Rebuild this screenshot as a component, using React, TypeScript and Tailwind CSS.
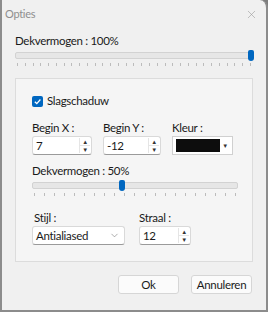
import React from 'react';
import { ChevronDown, X } from 'lucide-react';

function Ticks({ count }: { count: number }) {
  return (
    <div className="flex justify-between px-[2px] mt-[4px]">
      {Array.from({ length: count }).map((_, i) => (
        <span key={i} className="w-px h-[3px] bg-[#bcbcbc]" />
      ))}
    </div>
  );
}

function Slider({ pct, ticks }: { pct: number; ticks: number }) {
  return (
    <div>
      <div className="relative h-[7px] mt-[4px] bg-[#e6e6e6] border border-[#d2d2d2] rounded-[2px]">
        <span
          className="absolute top-[-3px] w-[6px] h-[11px] bg-[#0067c0] rounded-[2px] rounded-b-[3px]"
          style={{ left: `calc(${pct}% - 4px)` }}
        />
      </div>
      <Ticks count={ticks} />
    </div>
  );
}

function Spin({ value, width }: { value: string; width: string }) {
  return (
    <div className={`flex h-[19px] bg-white border border-[#d9d9d9] border-b-[#9a9a9a] rounded-[3px] ${width}`}>
      <span className="flex-1 pl-[3px] leading-[18px]">{value}</span>
      <div className="flex flex-col w-[11px] mr-[1px] my-[1px] border-l border-[#e5e5e5]">
        <span className="flex-1 flex items-center justify-center text-[6px] leading-none text-[#333]">▲</span>
        <span className="flex-1 flex items-center justify-center text-[6px] leading-none text-[#333] border-t border-[#e5e5e5]">▼</span>
      </div>
    </div>
  );
}

export default function App() {
  return (
    <div className="w-[268px] h-[312px] bg-[#7d7d7d] font-['Lato',sans-serif] text-[11.5px] tracking-[-0.3px] text-[#1a1a1a]">
      <div className="h-full flex flex-col bg-[#f0f0f0] border-[2px] border-[#8c8c8c] border-t-0 rounded-tr-[8px]">
        <div className="flex items-center justify-between h-[28px] pl-[3px] pr-[8px]">
          <span className="text-[11px] text-[#8e8e8e]">Opties</span>
          <X className="w-[13px] h-[13px] text-[#9a9a9a]" strokeWidth={1.1} />
        </div>

        <div className="px-[13px] pt-[6px]">
          <p className="leading-[14px]">Dekvermogen : 100%</p>
          <Slider pct={100} ticks={31} />

          <div className="mt-[12px] h-[184px] bg-[#f5f5f5] border border-[#dcdcdc] pl-[16px] pr-[14px] pt-[16px]">
            <label className="flex items-center gap-[4px] h-[12px]">
              <span className="w-[11px] h-[11px] rounded-[2px] bg-[#0067c0] flex items-center justify-center">
                <svg viewBox="0 0 10 10" className="w-[9px] h-[9px]">
                  <path d="M2 5.2 L4.2 7.3 L8.2 2.8" fill="none" stroke="white" strokeWidth="1.4" />
                </svg>
              </span>
              <span>Slagschaduw</span>
            </label>

            <div className="flex gap-[11px] mt-[14px]">
              <div>
                <p className="leading-[14px] mb-[1px]">Begin X :</p>
                <Spin value="7" width="w-[60px]" />
              </div>
              <div>
                <p className="leading-[14px] mb-[1px]">Begin Y :</p>
                <Spin value="-12" width="w-[58px]" />
              </div>
              <div>
                <p className="leading-[14px] mb-[1px]">Kleur :</p>
                <div className="flex items-center h-[19px] w-[61px] bg-white border border-[#d0d0d0] pl-[3px] pr-[2px]">
                  <span className="w-[44px] h-[13px] bg-[#0d0d0d]" />
                  <span className="flex-1 text-center text-[6px] text-[#333]">▼</span>
                </div>
              </div>
            </div>

            <p className="leading-[14px] mt-[9px]">Dekvermogen : 50%</p>
            <Slider pct={44} ticks={21} />

            <div className="flex gap-[14px] mt-[15px]">
              <div>
                <p className="leading-[14px] mb-[1px] pl-[2px]">Stijl :</p>
                <div className="flex items-center justify-between h-[19px] w-[93px] bg-white border border-[#d9d9d9] border-b-[#9a9a9a] rounded-[3px] pl-[3px] pr-[4px]">
                  <span>Antialiased</span>
                  <ChevronDown className="w-[11px] h-[11px] text-[#777]" strokeWidth={1.3} />
                </div>
              </div>
              <div>
                <p className="leading-[14px] mb-[1px]">Straal :</p>
                <Spin value="12" width="w-[52px]" />
              </div>
            </div>
          </div>

          <div className="flex justify-end gap-[12px] mt-[13px] pr-[1px]">
            <button className="w-[61px] h-[19px] bg-[#fbfbfb] border border-[#d6d6d6] rounded-[3px] leading-none">Ok</button>
            <button className="w-[61px] h-[19px] bg-[#fbfbfb] border border-[#d6d6d6] rounded-[3px] leading-none">Annuleren</button>
          </div>
        </div>
      </div>
    </div>
  );
}
